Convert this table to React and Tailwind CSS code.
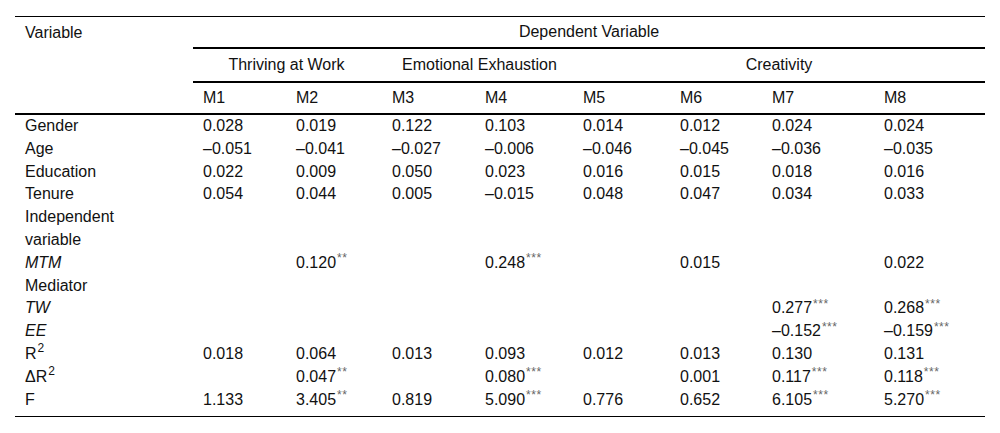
import React from "react";

const COLS = "grid-cols-[178px_93px_96px_93px_98px_97px_92px_112px_111px]";

const MODELOS = ["M1", "M2", "M3", "M4", "M5", "M6", "M7", "M8"];

// valor, estrellas
const FILAS = [
  { label: "Gender", vals: ["0.028", "0.019", "0.122", "0.103", "0.014", "0.012", "0.024", "0.024"] },
  { label: "Age", vals: ["–0.051", "–0.041", "–0.027", "–0.006", "–0.046", "–0.045", "–0.036", "–0.035"] },
  { label: "Education", vals: ["0.022", "0.009", "0.050", "0.023", "0.016", "0.015", "0.018", "0.016"] },
  { label: "Tenure", vals: ["0.054", "0.044", "0.005", "–0.015", "0.048", "0.047", "0.034", "0.033"] },
  { label: "Independent", vals: [] },
  { label: "variable", vals: [] },
  { label: "MTM", italic: true, vals: ["", "0.120|**", "", "0.248|***", "", "0.015", "", "0.022"] },
  { label: "Mediator", vals: [] },
  { label: "TW", italic: true, vals: ["", "", "", "", "", "", "0.277|***", "0.268|***"] },
  { label: "EE", italic: true, vals: ["", "", "", "", "", "", "–0.152|***", "–0.159|***"] },
  { label: "R2", sup: true, vals: ["0.018", "0.064", "0.013", "0.093", "0.012", "0.013", "0.130", "0.131"] },
  { label: "ΔR2", sup: true, vals: ["", "0.047|**", "", "0.080|***", "", "0.001", "0.117|***", "0.118|***"] },
  { label: "F", vals: ["1.133", "3.405|**", "0.819", "5.090|***", "0.776", "0.652", "6.105|***", "5.270|***"] },
];

function Valor({ v }) {
  if (!v) return null;
  const [num, stars] = v.split("|");
  return (
    <>
      {num}
      {stars && (
        <sup className="text-[12px] tracking-[0.5px] text-[#666] top-[-0.45em] ml-[1px]">{stars}</sup>
      )}
    </>
  );
}

function Etiqueta({ fila }) {
  if (fila.sup) {
    const base = fila.label.slice(0, -1);
    return (
      <>
        {base}
        <sup className="text-[12px] top-[-0.6em] ml-[1px]">2</sup>
      </>
    );
  }
  return <span className={fila.italic ? "italic" : ""}>{fila.label}</span>;
}

export default function App() {
  return (
    <div
      className="w-[1000px] h-[433px] bg-white text-[#111] text-[16px]"
      style={{ fontFamily: '"Liberation Sans", Arial, sans-serif' }}
    >
      <div className="pt-[16px] pl-[15px]">
        <div className="w-[970px] border-t border-b border-black pb-[5px]">
          {/* Encabezado */}
          <div className={`grid ${COLS}`}>
            <div className="row-span-3 border-b-2 border-black pl-[10px] pt-[6px] leading-[20px]">
              Variable
            </div>
            <div className="col-span-8 h-[32px] border-b-2 border-black flex items-center justify-center">
              Dependent Variable
            </div>
            <div className="col-span-2 h-[34px] border-b-2 border-black flex items-center justify-center pr-[2px]">
              Thriving at Work
            </div>
            <div className="col-span-2 h-[34px] border-b-2 border-black flex items-center justify-center pl-[4px]">
              Emotional Exhaustion
            </div>
            <div className="col-span-4 h-[34px] border-b-2 border-black flex items-center justify-center">
              Creativity
            </div>
            {MODELOS.map((m) => (
              <div key={m} className="h-[32px] border-b-2 border-black flex items-center pl-[10px]">
                {m}
              </div>
            ))}
          </div>

          {/* Cuerpo */}
          <div className={`grid ${COLS}`}>
            {FILAS.map((fila, i) => (
              <React.Fragment key={i}>
                <div className="h-[22.8px] leading-[22.8px] pl-[10px] whitespace-nowrap">
                  <Etiqueta fila={fila} />
                </div>
                {Array.from({ length: 8 }).map((_, j) => (
                  <div key={j} className="h-[22.8px] leading-[22.8px] pl-[10px] whitespace-nowrap">
                    <Valor v={fila.vals[j]} />
                  </div>
                ))}
              </React.Fragment>
            ))}
          </div>
        </div>
      </div>
    </div>
  );
}
